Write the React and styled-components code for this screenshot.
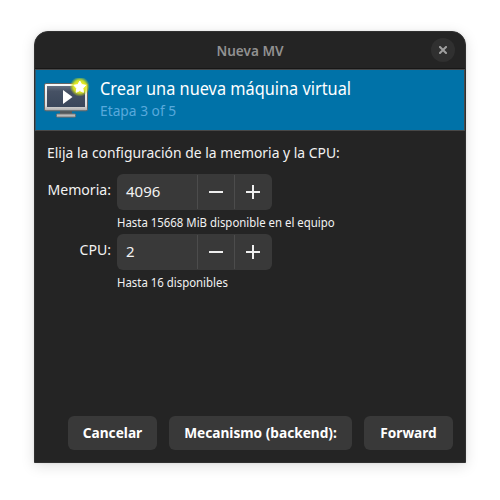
import React from "react";
import styled, { createGlobalStyle } from "styled-components";

const GlobalStyle = createGlobalStyle`
  * { box-sizing: border-box; }
  body { margin: 0; background: #fff; overflow: hidden; }
`;

const Desktop = styled.main`
  width: 500px;
  height: 500px;
  padding: 31px 34px 37px;
  background: #fff;
  font-family: "Noto Sans", sans-serif;
  color: #f2f2f2;
`;

const Dialog = styled.section`
  display: flex;
  flex-direction: column;
  height: 432px;
  border: 1px solid #303030;
  border-radius: 14px 14px 0 0;
  background: #242424;
  box-shadow: 0 3px 14px rgba(0, 0, 0, 0.13), 0 0 3px rgba(0, 0, 0, 0.08);
  overflow: hidden;
`;

const TitleBar = styled.header`
  display: grid;
  grid-template-columns: 34px 1fr 34px;
  align-items: center;
  height: 37px;
  border-bottom: 1px solid #171717;
`;

const Title = styled.h1`
  grid-column: 2;
  margin: 0;
  text-align: center;
  font-size: 14.67px;
  line-height: 20px;
  font-weight: 600;
  color: #919191;
  transform: scaleX(0.926);
`;

const CloseButton = styled.button`
  display: flex;
  align-items: center;
  justify-content: center;
  width: 24px;
  height: 24px;
  padding: 0;
  border: 0;
  border-radius: 50%;
  background: #303030;
`;

const Banner = styled.div`
  display: flex;
  height: 62px;
  padding: 8px 0 0 8px;
  gap: 8px;
  border: 1px solid #484848;
  border-left-color: #30566b;
  background: #0072a8;
`;

const BannerText = styled.div`
  display: flex;
  flex-direction: column;
  align-items: flex-start;
`;

const Heading = styled.h2`
  margin: -2px 0 0;
  font-size: 17.6px;
  line-height: 24px;
  font-weight: 400;
  white-space: nowrap;
  color: #fff;
  transform: scaleX(0.927);
  transform-origin: left;
`;

const Step = styled.span`
  margin-top: -1px;
  font-size: 14.67px;
  line-height: 22px;
  color: #58a9dc;
  transform: scaleX(0.94);
  transform-origin: left;
`;

const Content = styled.div`
  flex: 1;
  padding: 11px 12px 0;
`;

const Prompt = styled.p`
  margin: 0;
  font-size: 14.67px;
  line-height: 20px;
  white-space: nowrap;
  transform: scaleX(0.948);
  transform-origin: left;
`;

const Form = styled.div`
  display: grid;
  grid-template-columns: 64px 1fr;
  column-gap: 6px;
  margin-top: 12px;
`;

const Label = styled.label`
  display: flex;
  justify-content: flex-end;
  padding-top: 5px;
  font-size: 14.67px;
  line-height: 20px;
  white-space: nowrap;
  transform: scaleX(0.962);
  transform-origin: right;
`;

const Field = styled.div`
  height: 60px;
`;

const SpinBox = styled.div`
  display: grid;
  grid-template-columns: 80px 37px 38px;
  width: 155px;
  height: 36px;
  border-radius: 6px;
  background: #393939;
  overflow: hidden;
`;

const Value = styled.span`
  padding-left: 9px;
  font-size: 15px;
  line-height: 35px;
`;

const SpinButton = styled.button`
  display: flex;
  align-items: center;
  justify-content: center;
  height: 34px;
  margin: 1px 0;
  padding: 0;
  border: 0;
  border-left: 1px solid #4c4c4c;
  background: transparent;

  &:last-child { padding-right: 2px; }
`;

const Hint = styled.p`
  margin: 4px 0 0;
  font-size: 12.2px;
  line-height: 18px;
  white-space: nowrap;
  transform: scaleX(0.935);
  transform-origin: left;
`;

const Actions = styled.footer`
  display: flex;
  justify-content: flex-end;
  gap: 12px;
  padding: 0 12px 12px;
`;

const ActionButton = styled.button`
  width: ${(p) => p.$width}px;
  height: 34px;
  padding: 0;
  border: 0;
  border-radius: 6px;
  background: #393939;
  color: #fff;
  font: 700 14.4px/34px "Noto Sans", sans-serif;
  white-space: nowrap;
`;

const ButtonLabel = styled.span`
  display: block;
  transform: scaleX(0.95);
`;

const Icon = styled.svg`
  display: block;
  flex: none;
`;

function MonitorIcon() {
  return (
    <Icon width="48" height="44" viewBox="0 0 48 44">
      <defs>
        <linearGradient id="bezel" x2="0" y2="1">
          <stop offset="0" stopColor="#fafafa" />
          <stop offset=".8" stopColor="#ddd" />
          <stop offset="1" stopColor="#aaa" />
        </linearGradient>
        <linearGradient id="screen" x2="0" y2="1">
          <stop offset="0" stopColor="#677181" />
          <stop offset=".25" stopColor="#465164" />
          <stop offset="1" stopColor="#3a475b" />
        </linearGradient>
        <radialGradient id="glow">
          <stop offset=".3" stopColor="#f7f52a" />
          <stop offset=".65" stopColor="#dce71c" stopOpacity=".9" />
          <stop offset="1" stopColor="#c7df10" stopOpacity="0" />
        </radialGradient>
      </defs>
      <path d="M16 33h12v4H16z" fill="#50585c" />
      <rect x="12.5" y="35.9" width="19" height="3.2" rx=".7" fill="#bbb" stroke="#6e6e6e" />
      <rect x=".5" y="5.5" width="43" height="27.3" rx="1.5" fill="url(#bezel)" stroke="#656565" />
      <rect x="3" y="8" width="38" height="21" fill="url(#screen)" />
      <path d="M19 12v14l9.5-7z" fill="#fff" />
      <circle cx="35.8" cy="8.6" r="10" fill="url(#glow)" />
      <path d="m35.8 3 1.9 3.6 4 .7-2.8 3 .5 4-3.6-1.7-3.6 1.7.5-4-2.8-3 4-.7z" fill="#fff" stroke="#fff" strokeLinejoin="round" />
    </Icon>
  );
}

function Spinner({ value }) {
  return (
    <SpinBox>
      <Value>{value}</Value>
      <SpinButton aria-label="Reducir">
        <Icon width="14" height="14"><path d="M0 6h14v2H0z" fill="#eee" /></Icon>
      </SpinButton>
      <SpinButton aria-label="Aumentar">
        <Icon width="14" height="14"><path d="M0 6h6V0h2v6h6v2H8v6H6V8H0z" fill="#eee" /></Icon>
      </SpinButton>
    </SpinBox>
  );
}

export default function App() {
  return (
    <>
      <GlobalStyle />
      <Desktop>
        <Dialog>
          <TitleBar>
            <Title>Nueva MV</Title>
            <CloseButton aria-label="Cerrar">
              <Icon width="8" height="8"><path d="m1 1 6 6m0-6-6 6" stroke="#a0a0a0" strokeWidth="2" strokeLinecap="square" /></Icon>
            </CloseButton>
          </TitleBar>
          <Banner>
            <MonitorIcon />
            <BannerText>
              <Heading>Crear una nueva máquina virtual</Heading>
              <Step>Etapa 3 of 5</Step>
            </BannerText>
          </Banner>
          <Content>
            <Prompt>Elija la configuración de la memoria y la CPU:</Prompt>
            <Form>
              <Label>Memoria:</Label>
              <Field>
                <Spinner value="4096" />
                <Hint>Hasta 15668 MiB disponible en el equipo</Hint>
              </Field>
              <Label>CPU:</Label>
              <Field>
                <Spinner value="2" />
                <Hint>Hasta 16 disponibles</Hint>
              </Field>
            </Form>
          </Content>
          <Actions>
            <ActionButton $width={89}><ButtonLabel>Cancelar</ButtonLabel></ActionButton>
            <ActionButton $width={183}><ButtonLabel>Mecanismo (backend):</ButtonLabel></ActionButton>
            <ActionButton $width={89}><ButtonLabel>Forward</ButtonLabel></ActionButton>
          </Actions>
        </Dialog>
      </Desktop>
    </>
  );
}
